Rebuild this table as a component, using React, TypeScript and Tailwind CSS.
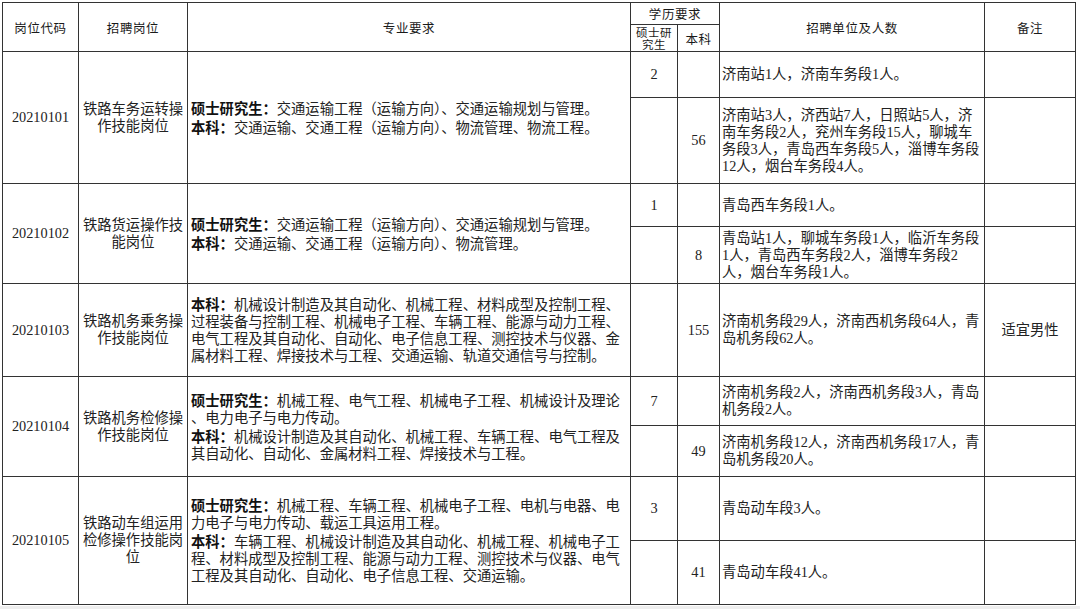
import React from "react";

const serif = "font-['Liberation_Serif','Noto_Sans_CJK_SC',serif]";
const sans = "font-['Noto_Sans_CJK_SC','Liberation_Sans',sans-serif]";

const td = "border-[1.5px] border-[#333] p-0 align-middle";
const th = `${td} ${sans} font-normal text-[12.5px] tracking-[0.6px] text-[#1a1a1a] text-center`;

type Sub = { m: string; b: string; unit: React.ReactNode; note: string; h: string };
type Row = { code: string; post: React.ReactNode; major: React.ReactNode; subs: Sub[] };

const L = ({ children }: { children: React.ReactNode }) => (
  <span className={`${sans} font-bold text-[#111]`}>{children}</span>
);

const rows: Row[] = [
  {
    code: "20210101",
    post: (<>铁路车务运转操<br />作技能岗位</>),
    major: (
      <>
        <L>硕士研究生：</L>交通运输工程（运输方向）、交通运输规划与管理。<br />
        <L>本科：</L>交通运输、交通工程（运输方向）、物流管理、物流工程。
      </>
    ),
    subs: [
      { m: "2", b: "", unit: "济南站1人，济南车务段1人。", note: "", h: "h-[46px]" },
      {
        m: "",
        b: "56",
        unit: (<>济南站3人，济西站7人，日照站5人，济<br />南车务段2人，兖州车务段15人，聊城车<br />务段3人，青岛西车务段5人，淄博车务段<br />12人，烟台车务段4人。</>),
        note: "",
        h: "h-[86px]",
      },
    ],
  },
  {
    code: "20210102",
    post: (<>铁路货运操作技<br />能岗位</>),
    major: (
      <>
        <L>硕士研究生：</L>交通运输工程（运输方向）、交通运输规划与管理。<br />
        <L>本科：</L>交通运输、交通工程（运输方向）、物流管理。
      </>
    ),
    subs: [
      { m: "1", b: "", unit: "青岛西车务段1人。", note: "", h: "h-[43px]" },
      {
        m: "",
        b: "8",
        unit: (<>青岛站1人，聊城车务段1人，临沂车务段<br />1人，青岛西车务段2人，淄博车务段2<br />人，烟台车务段1人。</>),
        note: "",
        h: "h-[57px]",
      },
    ],
  },
  {
    code: "20210103",
    post: (<>铁路机务乘务操<br />作技能岗位</>),
    major: (
      <>
        <L>本科：</L>机械设计制造及其自动化、机械工程、材料成型及控制工程、<br />
        过程装备与控制工程、机械电子工程、车辆工程、能源与动力工程、<br />
        电气工程及其自动化、自动化、电子信息工程、测控技术与仪器、金<br />
        属材料工程、焊接技术与工程、交通运输、轨道交通信号与控制。
      </>
    ),
    subs: [
      {
        m: "",
        b: "155",
        unit: (<>济南机务段29人，济南西机务段64人，青<br />岛机务段62人。</>),
        note: "适宜男性",
        h: "h-[93px]",
      },
    ],
  },
  {
    code: "20210104",
    post: (<>铁路机务检修操<br />作技能岗位</>),
    major: (
      <>
        <L>硕士研究生：</L>机械工程、电气工程、机械电子工程、机械设计及理论<br />
        、电力电子与电力传动。<br />
        <L>本科：</L>机械设计制造及其自动化、机械工程、车辆工程、电气工程及<br />
        其自动化、自动化、金属材料工程、焊接技术与工程。
      </>
    ),
    subs: [
      { m: "7", b: "", unit: (<>济南机务段2人，济南西机务段3人，青岛<br />机务段2人。</>), note: "", h: "h-[49px]" },
      { m: "", b: "49", unit: (<>济南机务段12人，济南西机务段17人，青<br />岛机务段20人。</>), note: "", h: "h-[51px]" },
    ],
  },
  {
    code: "20210105",
    post: (<>铁路动车组运用<br />检修操作技能岗<br />位</>),
    major: (
      <>
        <L>硕士研究生：</L>机械工程、车辆工程、机械电子工程、电机与电器、电<br />
        力电子与电力传动、载运工具运用工程。<br />
        <L>本科：</L>车辆工程、机械设计制造及其自动化、机械工程、机械电子工<br />
        程、材料成型及控制工程、能源与动力工程、测控技术与仪器、电气<br />
        工程及其自动化、自动化、电子信息工程、交通运输。
      </>
    ),
    subs: [
      { m: "3", b: "", unit: "青岛动车段3人。", note: "", h: "h-[64px]" },
      { m: "", b: "41", unit: "青岛动车段41人。", note: "", h: "h-[64px]" },
    ],
  },
];

export default function App() {
  return (
    <div className="w-[1080px] h-[609px] bg-white overflow-hidden flex flex-col">
      <div className="pt-[2px] pl-[2px]">
        <table className={`border-collapse table-fixed w-[1073px] text-[14.3px] leading-[17px] text-[#222] ${serif}`}>
          <colgroup>
            <col className="w-[76px]" />
            <col className="w-[109px]" />
            <col className="w-[443px]" />
            <col className="w-[47px]" />
            <col className="w-[42px]" />
            <col className="w-[265px]" />
            <col className="w-[91px]" />
          </colgroup>
          <thead>
            <tr className="h-[22px]">
              <th rowSpan={2} className={th}>岗位代码</th>
              <th rowSpan={2} className={th}>招聘岗位</th>
              <th rowSpan={2} className={th}>专业要求</th>
              <th colSpan={2} className={th}>学历要求</th>
              <th rowSpan={2} className={th}>招聘单位及人数</th>
              <th rowSpan={2} className={th}>备注</th>
            </tr>
            <tr className="h-[27px]">
              <th className={`${td} ${sans} font-normal text-[11.5px] text-[#1a1a1a] text-center`}>
                <div className="leading-[12.5px] tracking-[0.5px]">硕士研<br />究生</div>
              </th>
              <th className={th}>本科</th>
            </tr>
          </thead>
          <tbody>
            {rows.map((r) =>
              r.subs.map((s, i) => (
                <tr key={r.code + i} className={s.h}>
                  {i === 0 && (
                    <>
                      <td rowSpan={r.subs.length} className={`${td} text-center`}>{r.code}</td>
                      <td rowSpan={r.subs.length} className={`${td} text-center`}>{r.post}</td>
                      <td rowSpan={r.subs.length} className={`${td} px-[3px] whitespace-nowrap`}>{r.major}</td>
                    </>
                  )}
                  <td className={`${td} text-center`}>{s.m}</td>
                  <td className={`${td} text-center`}>{s.b}</td>
                  <td className={`${td} px-[2px] whitespace-nowrap`}>{s.unit}</td>
                  <td className={`${td} text-center`}>{s.note}</td>
                </tr>
              ))
            )}
          </tbody>
        </table>
      </div>
      <div className="flex-1 bg-[#eeeeee] mt-[1px]" />
    </div>
  );
}
